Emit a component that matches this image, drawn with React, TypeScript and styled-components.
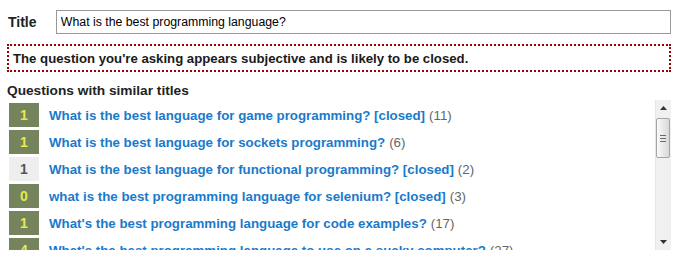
import React from "react";
import styled, { createGlobalStyle } from "styled-components";

const Global = createGlobalStyle`
  html, body { margin: 0; padding: 0; background: #fff; }
  body { font-family: Arial, "Liberation Sans", Helvetica, sans-serif; color: #222; }
`;

const Page = styled.div`
  padding: 10px 12px 0 7px;
  width: 683px;
  box-sizing: border-box;
`;

const TitleRow = styled.div`
  display: flex;
  align-items: center;
`;

const Label = styled.label`
  font-weight: bold;
  font-size: 14px;
  color: #222;
  width: 49px;
  padding-left: 1px;
  box-sizing: border-box;
`;

const TitleInput = styled.input`
  box-sizing: border-box;
  width: 617px;
  height: 24px;
  border: 1px solid #999;
  padding: 0 4px;
  font-family: Arial, "Liberation Sans", sans-serif;
  font-size: 12.3px;
  color: #000;
  outline: none;
  margin: 0;
`;

const Warning = styled.div`
  box-sizing: border-box;
  margin-top: 10px;
  width: 664px;
  height: 28px;
  border: 2px dotted #990000;
  padding: 0 4px;
  display: flex;
  align-items: center;
  font-weight: bold;
  font-size: 13.2px;
  color: #1a1a1a;
`;

const Heading = styled.h3`
  margin: 9px 0 0 0;
  font-size: 13.7px;
  font-weight: bold;
  color: #222;
  line-height: 19px;
`;

const ListFrame = styled.div`
  display: flex;
  width: 664px;
  height: 150px;
`;

const Rows = styled.div`
  flex: 1;
  overflow: hidden;
  padding: 3px 0 0 2px;
  display: flex;
  flex-direction: column;
  gap: 3px;
`;

const ScrollBar = styled.div`
  flex: 0 0 16px;
  display: flex;
  flex-direction: column;
  background: #f0f0f0;
  border-left: 1px solid #e6e6e6;
  box-sizing: border-box;
`;

const ArrowButton = styled.div`
  flex: 0 0 16px;
  display: flex;
  align-items: center;
  justify-content: center;
`;

const Track = styled.div`
  flex: 1;
  padding-top: 2px;
  display: flex;
  flex-direction: column;
`;

const Thumb = styled.div`
  box-sizing: border-box;
  height: 40px;
  margin: 0 1px 0 0;
  border: 1px solid #a5a5a5;
  border-radius: 2px;
  background: linear-gradient(to right, #fafafa, #e6e6e6 60%, #d8d8d8);
  display: flex;
  flex-direction: column;
  align-items: center;
  justify-content: center;
  gap: 2px;
`;

const Grip = styled.span`
  display: block;
  width: 6px;
  height: 1px;
  background: #6b6b6b;
`;

const Row = styled.div`
  display: flex;
  align-items: center;
  flex: 0 0 24px;
  gap: 10px;
`;

const Badge = styled.div<{ $answered: boolean }>`
  flex: 0 0 30px;
  height: 24px;
  display: flex;
  align-items: center;
  justify-content: center;
  font-weight: bold;
  font-size: 14px;
  background: ${(p) => (p.$answered ? "#75845c" : "#eeeeee")};
  color: ${(p) => (p.$answered ? "#e3ea50" : "#555")};
`;

const QLink = styled.a`
  font-size: 13.3px;
  font-weight: bold;
  color: #1a7acb;
  text-decoration: none;
  white-space: nowrap;
`;

const Count = styled.span`
  font-size: 13.3px;
  color: #666;
  margin-left: 4px;
  white-space: nowrap;
`;

const questions = [
  { votes: 1, answered: true, title: "What is the best language for game programming? [closed]", count: 11 },
  { votes: 1, answered: true, title: "What is the best language for sockets programming?", count: 6 },
  { votes: 1, answered: false, title: "What is the best language for functional programming? [closed]", count: 2 },
  { votes: 0, answered: true, title: "what is the best programming language for selenium? [closed]", count: 3 },
  { votes: 1, answered: true, title: "What's the best programming language for code examples?", count: 17 },
  { votes: 4, answered: true, title: "What's the best programming language to use on a sucky computer?", count: 27 },
  { votes: 2, answered: true, title: "What is the best language for web development? [closed]", count: 14 },
  { votes: 3, answered: true, title: "What is the best programming language for beginners? [closed]", count: 42 },
];

export default function App() {
  return (
    <Page>
      <Global />
      <TitleRow>
        <Label htmlFor="title">Title</Label>
        <TitleInput id="title" defaultValue="What is the best programming language?" />
      </TitleRow>
      <Warning>The question you're asking appears subjective and is likely to be closed.</Warning>
      <Heading>Questions with similar titles</Heading>
      <ListFrame>
        <Rows>
          {questions.map((q, i) => (
            <Row key={i}>
              <Badge $answered={q.answered}>{q.votes}</Badge>
              <div>
                <QLink href="#">{q.title}</QLink>
                <Count>({q.count})</Count>
              </div>
            </Row>
          ))}
        </Rows>
        <ScrollBar>
          <ArrowButton>
            <svg width="7" height="4" viewBox="0 0 7 4"><polygon points="3.5,0 7,4 0,4" fill="#333" /></svg>
          </ArrowButton>
          <Track>
            <Thumb>
              <Grip />
              <Grip />
              <Grip />
            </Thumb>
          </Track>
          <ArrowButton>
            <svg width="7" height="4" viewBox="0 0 7 4"><polygon points="0,0 7,0 3.5,4" fill="#333" /></svg>
          </ArrowButton>
        </ScrollBar>
      </ListFrame>
    </Page>
  );
}
